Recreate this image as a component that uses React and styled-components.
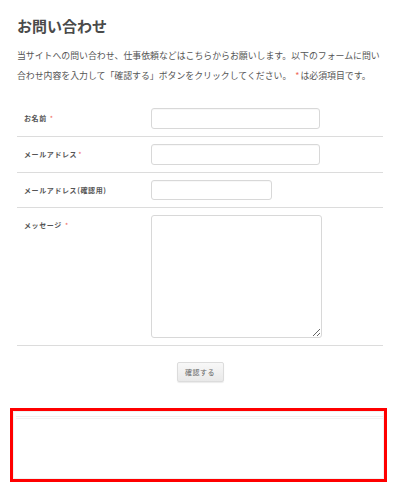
import React from "react";
import styled, { createGlobalStyle } from "styled-components";

const Global = createGlobalStyle`
  html, body { margin: 0; padding: 0; background: #fff; }
  body {
    font-family: "Noto Sans CJK JP", "Noto Sans", sans-serif;
    color: #555;
  }
`;

const Page = styled.div`
  padding: 0 17px 20px;
`;

const Title = styled.h1`
  margin: 14px 0 0;
  font-size: 15px;
  line-height: 24px;
  font-weight: 700;
  color: #4a4a4a;
`;

const Lead = styled.p`
  margin: 8px -6px 0 0;
  font-size: 8.9px;
  line-height: 20px;
  color: #555;
  white-space: nowrap;
`;

const Req = styled.span`
  color: #f06a5a;
  font-weight: 400;
  margin: 0 ${(p) => p.$after || 0}px 0 ${(p) => p.$gap || 0}px;
`;

const Form = styled.form`
  margin-top: 15px;
`;

const Row = styled.div`
  display: grid;
  grid-template-columns: 127px 1fr;
  align-items: start;
  padding: 7px 0 7px 7px;
  border-bottom: 1px solid #dcdcdc;
`;

const Label = styled.label`
  display: block;
  padding-top: 4px;
  font-size: 7px;
  line-height: 12px;
  font-weight: 700;
  letter-spacing: 0.6px;
  color: #555;
`;

const Input = styled.input`
  display: block;
  box-sizing: border-box;
  width: ${(p) => p.$w}px;
  height: ${(p) => p.$h || 21}px;
  border: 1px solid #d8d8d8;
  border-radius: 3px;
  background: #fff;
  box-shadow: inset 0 1px 1px rgba(0, 0, 0, 0.03);
  margin: 0;
  padding: 0 4px;
  outline: none;
`;

const TextArea = styled.textarea`
  display: block;
  box-sizing: border-box;
  width: 171px;
  height: 123px;
  border: 1px solid #d8d8d8;
  border-radius: 3px;
  background: #fff;
  margin: 0;
  outline: none;
`;

const Actions = styled.div`
  display: flex;
  justify-content: center;
  margin-top: 16px;
`;

const Button = styled.button`
  box-sizing: border-box;
  width: 47px;
  height: 20px;
  padding: 0;
  border: 1px solid #dcdcdc;
  border-radius: 2px;
  background: linear-gradient(#f8f8f8, #e9e9e9);
  box-shadow: 0 1px 1px rgba(0, 0, 0, 0.08);
  font-family: inherit;
  font-size: 7px;
  letter-spacing: 0.5px;
  color: #666;
`;

const Highlight = styled.div`
  box-sizing: border-box;
  margin: 26px 0 0 -7px;
  width: 377px;
  height: 74px;
  border: 3px solid #ff0000;
  box-shadow: inset 0 0 0 1px #f1f1f1;
  padding: 5px 1px 0 3px;
`;

const AdRule = styled.div`
  height: 1px;
  border-top: 1px solid #eeeeee;
  border-bottom: 1px solid #f2f2f2;
`;

const fields = [
  { label: "お名前", req: true, w: 169, h: 21, gap: 3 },
  { label: "メールアドレス", req: true, w: 169, h: 21, gap: 1 },
  { label: "メールアドレス(確認用)", req: false, w: 121, h: 20 },
];

export default function App() {
  return (
    <>
      <Global />
      <Page>
        <Title>お問い合わせ</Title>
        <Lead>
          当サイトへの問い合わせ、仕事依頼などはこちらからお願いします。以下のフォームに問い
          <br />
          合わせ内容を入力して「確認する」ボタンをクリックしてください。
          <Req $gap={4} $after={1}>*</Req>は必須項目です。
        </Lead>
        <Form onSubmit={(e) => e.preventDefault()}>
          {fields.map((f) => (
            <Row key={f.label}>
              <Label>
                {f.label}
                {f.req && <Req $gap={f.gap}>*</Req>}
              </Label>
              <Input $w={f.w} $h={f.h} type="text" />
            </Row>
          ))}
          <Row>
            <Label>
              メッセージ<Req $gap={3}>*</Req>
            </Label>
            <TextArea />
          </Row>
          <Actions>
            <Button type="submit">確認する</Button>
          </Actions>
        </Form>
        <Highlight>
          <AdRule />
        </Highlight>
      </Page>
    </>
  );
}
